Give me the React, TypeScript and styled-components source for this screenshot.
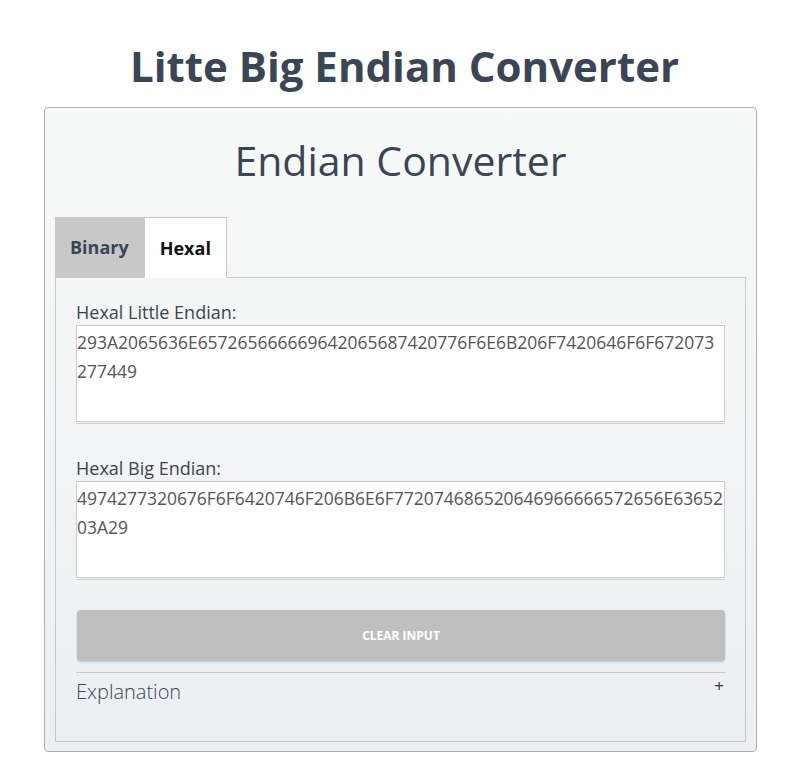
import React, { useState } from "react";
import styled, { createGlobalStyle } from "styled-components";

const Global = createGlobalStyle`
  html, body { margin: 0; padding: 0; background: #ffffff; }
  body { font-family: "Open Sans", "Noto Sans", sans-serif; color: #3a4556; }
  * { box-sizing: border-box; }
`;

const Page = styled.div`
  width: 713px;
  margin-left: 44px;
  padding-top: 36px;
`;

const Title = styled.h1`
  margin: 0 0 11px 0;
  text-align: center;
  font-size: 42px;
  line-height: 60px;
  font-weight: 700;
  color: #3a4556;
  padding-left: 8px;
`;

const Card = styled.div`
  border: 1px solid #aeaeae;
  border-radius: 4px;
  background: linear-gradient(#f8f9f9, #eceff1);
  padding: 10px 10px 9px 10px;
`;

const CardTitle = styled.h2`
  margin: 15px 0 30px 0;
  text-align: center;
  font-size: 41px;
  line-height: 54px;
  font-weight: 400;
  color: #3a4556;
`;

const TabBar = styled.div`
  display: flex;
  margin-bottom: -1px;
  position: relative;
  z-index: 1;
`;

const Tab = styled.button<{ $active?: boolean }>`
  height: 61px;
  padding: 0 15px;
  font-family: "Open Sans", sans-serif;
  font-size: 18px;
  font-weight: 700;
  cursor: pointer;
  border: ${(p) => (p.$active ? "1px solid #c8c8c8" : "none")};
  border-bottom: ${(p) => (p.$active ? "1px solid #ffffff" : "1px solid #c8c8c8")};
  background: ${(p) => (p.$active ? "#ffffff" : "#c8c8c8")};
  color: ${(p) => (p.$active ? "#111111" : "#3a4556")};
`;

const Panel = styled.div`
  border: 1px solid #c8c8c8;
  padding: 22px 20px 20px 20px;
  display: flex;
  flex-direction: column;
`;

const Field = styled.div<{ $gap?: number }>`
  display: flex;
  flex-direction: column;
  margin-bottom: ${(p) => p.$gap ?? 0}px;
`;

const Label = styled.label`
  font-size: 18px;
  line-height: 24px;
  color: #3a4556;
  margin-bottom: 1px;
`;

const AreaWrap = styled.div`
  border-bottom: 1px solid #d0d0d0;
  padding-bottom: 1px;
`;

const Area = styled.textarea`
  display: block;
  width: 100%;
  height: 97px;
  border: 1px solid #cccccc;
  background: #ffffff;
  padding: 2px 0 0 0;
  margin: 0;
  resize: none;
  font-family: "Open Sans", sans-serif;
  font-size: 17.48px;
  line-height: 29px;
  color: #555555;
  word-break: break-all;
  outline: none;
  overflow: hidden;
`;

const ClearButton = styled.button`
  margin: 0 0 0 1px;
  height: 51px;
  border: none;
  border-radius: 4px;
  background: #bfbfbf;
  box-shadow: 0 1px 2px rgba(120, 170, 220, 0.6);
  color: #ffffff;
  font-family: "Open Sans", sans-serif;
  font-size: 12px;
  font-weight: 700;
  cursor: pointer;
`;

const Divider = styled.hr`
  border: none;
  border-top: 1px solid #c8c8c8;
  margin: 11px 0 0 0;
`;

const Accordion = styled.div`
  display: flex;
  justify-content: space-between;
  align-items: flex-start;
  padding-top: 5px;
  height: 48px;
`;

const AccordionTitle = styled.span`
  font-size: 20px;
  font-weight: 300;
  line-height: 28px;
  color: #3a4556;
`;

const Plus = styled.span`
  font-size: 17px;
  line-height: 16px;
  color: #333;
  margin-right: 1px;
`;

const LITTLE = "293A2065636E657265666669642065687420776F6E6B206F7420646F6F672073277449";
const BIG = "4974277320676F6F6420746F206B6E6F772074686520646966666572656E6365203A29";

export default function App() {
  const [tab, setTab] = useState("hexal");
  const [little, setLittle] = useState(LITTLE);
  const [big, setBig] = useState(BIG);
  return (
    <>
      <Global />
      <Page>
        <Title>Litte Big Endian Converter</Title>
        <Card>
          <CardTitle>Endian Converter</CardTitle>
          <TabBar>
            <Tab $active={tab === "binary"} onClick={() => setTab("binary")}>Binary</Tab>
            <Tab $active={tab === "hexal"} onClick={() => setTab("hexal")}>Hexal</Tab>
          </TabBar>
          <Panel>
            <Field $gap={32}>
              <Label>Hexal Little Endian:</Label>
              <AreaWrap>
                <Area value={little} onChange={(e) => setLittle(e.target.value)} />
              </AreaWrap>
            </Field>
            <Field $gap={30}>
              <Label>Hexal Big Endian:</Label>
              <AreaWrap>
                <Area value={big} onChange={(e) => setBig(e.target.value)} />
              </AreaWrap>
            </Field>
            <ClearButton onClick={() => { setLittle(""); setBig(""); }}>CLEAR INPUT</ClearButton>
            <Divider />
            <Accordion>
              <AccordionTitle>Explanation</AccordionTitle>
              <Plus>+</Plus>
            </Accordion>
          </Panel>
        </Card>
      </Page>
    </>
  );
}
